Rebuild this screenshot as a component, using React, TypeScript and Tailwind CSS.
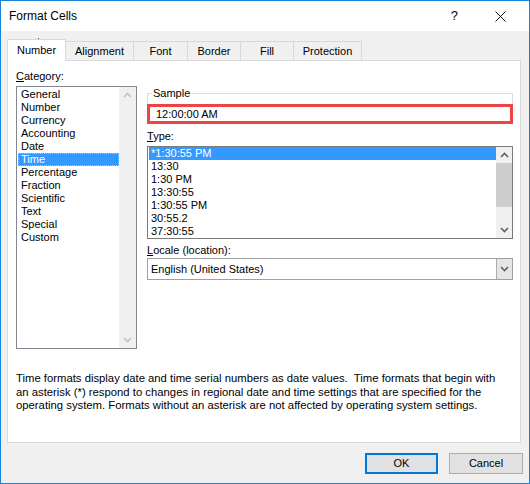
import React from "react";

const categories = ["General", "Number", "Currency", "Accounting", "Date", "Time", "Percentage", "Fraction", "Scientific", "Text", "Special", "Custom"];
const types = ["*1:30:55 PM", "13:30", "1:30 PM", "13:30:55", "1:30:55 PM", "30:55.2", "37:30:55"];
const tabs = [
  { name: "Alignment", w: "w-[68px]" },
  { name: "Font", w: "w-[54px]" },
  { name: "Border", w: "w-[53px]" },
  { name: "Fill", w: "w-[53px]" },
  { name: "Protection", w: "w-[68px]" },
];

function Chevron({ up, color }: { up?: boolean; color: string }) {
  return (
    <svg width="9" height="6" viewBox="0 0 9 6">
      <path d={up ? "M1 5 L4.5 1.5 L8 5" : "M1 1 L4.5 4.5 L8 1"} fill="none" stroke={color} strokeWidth="1.6" />
    </svg>
  );
}

export default function App() {
  return (
    <div
      className="relative w-[530px] h-[484px] border border-[#1883d7] bg-[#f0f0f0] flex flex-col text-[11px] text-black select-none"
      style={{ fontFamily: '"Liberation Sans", Arial, sans-serif' }}
    >
      {/* title bar */}
      <div className="h-[30px] bg-white flex items-center pl-[8px] pr-[23px] text-[12px]">
        <span>Format Cells</span>
        <span className="ml-auto mr-[37px] text-[13px]">?</span>
        <svg width="11" height="11" viewBox="0 0 11 11">
          <path d="M0.5 0.5 L10.5 10.5 M10.5 0.5 L0.5 10.5" stroke="#111" strokeWidth="1" />
        </svg>
      </div>

      {/* tabs */}
      <div className="flex items-end h-[29px] pl-[6px]">
        <div className="w-[59px] h-[22px] bg-white border border-b-0 border-[#d9d9d9] flex items-center justify-center mb-[-1px] relative z-10">
          Number
        </div>
        {tabs.map((t) => (
          <div key={t.name} className={`${t.w} h-[19px] bg-[#f0f0f0] border border-l-0 border-b-0 border-[#d9d9d9] flex items-center justify-center`}>
            {t.name}
          </div>
        ))}
      </div>

      {/* panel */}
      <div className="ml-[6px] w-[514px] h-[383px] bg-white border border-[#d9d9d9] flex flex-col pl-[8px] pt-[7px]">
        <div className="flex">
          {/* category */}
          <div className="flex flex-col w-[121px]">
            <div className="h-[16px] leading-[16px]"><span className="underline">C</span>ategory:</div>
            <div className="mt-[2px] h-[263px] border border-[#828790] flex">
              <div className="flex-1 pt-[1px] pl-[1px]">
                {categories.map((c) => (
                  <div
                    key={c}
                    className={`h-[13px] leading-[13px] pl-[3px] ${c === "Time" ? "bg-[#3399ff] text-white outline outline-1 outline-dotted outline-[#99ccff] -outline-offset-1" : ""}`}
                  >
                    {c}
                  </div>
                ))}
              </div>
              <div className="w-[17px] bg-[#f0f0f0] flex flex-col items-center justify-between py-[5px]">
                <Chevron up color="#c2c2c2" />
                <Chevron color="#c2c2c2" />
              </div>
            </div>
          </div>

          {/* right column */}
          <div className="ml-[10px] w-[366px] flex flex-col">
            <fieldset className="mt-[17px] border-t border-x border-[#dcdcdc]">
              <legend className="ml-[4px] px-[1px] leading-[16px]">Sample</legend>
              <div className="mt-[3px] -mx-[1px] h-[20px] border-[3px] border-[#ee4444] flex items-center pl-[6px]">
                12:00:00 AM
              </div>
            </fieldset>
            <div className="mt-[4px] h-[16px] leading-[16px]"><span className="underline">T</span>ype:</div>
            <div className="mt-[2px] h-[93px] border border-[#7a7a7a] flex">
              <div className="flex-1 pl-[1px]">
                {types.map((t, i) => (
                  <div key={t} className={`h-[13px] leading-[13px] pl-[2px] ${i === 0 ? "bg-[#3399ff] text-white" : ""}`}>
                    {t}
                  </div>
                ))}
              </div>
              <div className="w-[16px] bg-[#f0f0f0] flex flex-col items-center">
                <div className="h-[16px] flex items-center justify-center"><Chevron up color="#606060" /></div>
                <div className="w-full h-[44px] bg-[#cdcdcd]" />
                <div className="flex-1" />
                <div className="h-[16px] flex items-center justify-center"><Chevron color="#606060" /></div>
              </div>
            </div>
            <div className="mt-[3px] h-[16px] leading-[16px]"><span className="underline">L</span>ocale (location):</div>
            <div className="h-[22px] border border-[#a0a0a0] flex items-center">
              <span className="pl-[3px] flex-1">English (United States)</span>
              <div className="w-[16px] h-[20px] bg-[#e5e5e5] border-l border-[#acacac] flex items-center justify-center">
                <Chevron color="#606060" />
              </div>
            </div>
          </div>
        </div>

        <div className="mt-[23px] leading-[13.5px] text-[11.3px]">
          <div>Time formats display date and time serial numbers as date values.&nbsp; Time formats that begin with</div>
          <div>an asterisk (*) respond to changes in regional date and time settings that are specified for the</div>
          <div>operating system. Formats without an asterisk are not affected by operating system settings.</div>
        </div>
      </div>

      {/* buttons */}
      <div className="flex justify-end gap-[11px] pr-[6px] pt-[10px]">
        <button className="w-[73px] h-[21px] bg-[#e1e1e1] border-2 border-[#0078d7] text-[11px]">OK</button>
        <button className="w-[74px] h-[21px] bg-[#e1e1e1] border border-[#adadad] text-[11px]">Cancel</button>
      </div>

      {/* mouse pointer */}
      <svg className="absolute left-[37px] top-[37px]" width="13" height="20" viewBox="0 0 13 20">
        <path d="M0.5 0.5 L0.5 16 L4 12.5 L6.5 18.5 L8.8 17.5 L6.3 11.6 L11.3 11.6 Z" fill="#fff" stroke="#000" strokeWidth="1" strokeLinejoin="miter" />
      </svg>
    </div>
  );
}
